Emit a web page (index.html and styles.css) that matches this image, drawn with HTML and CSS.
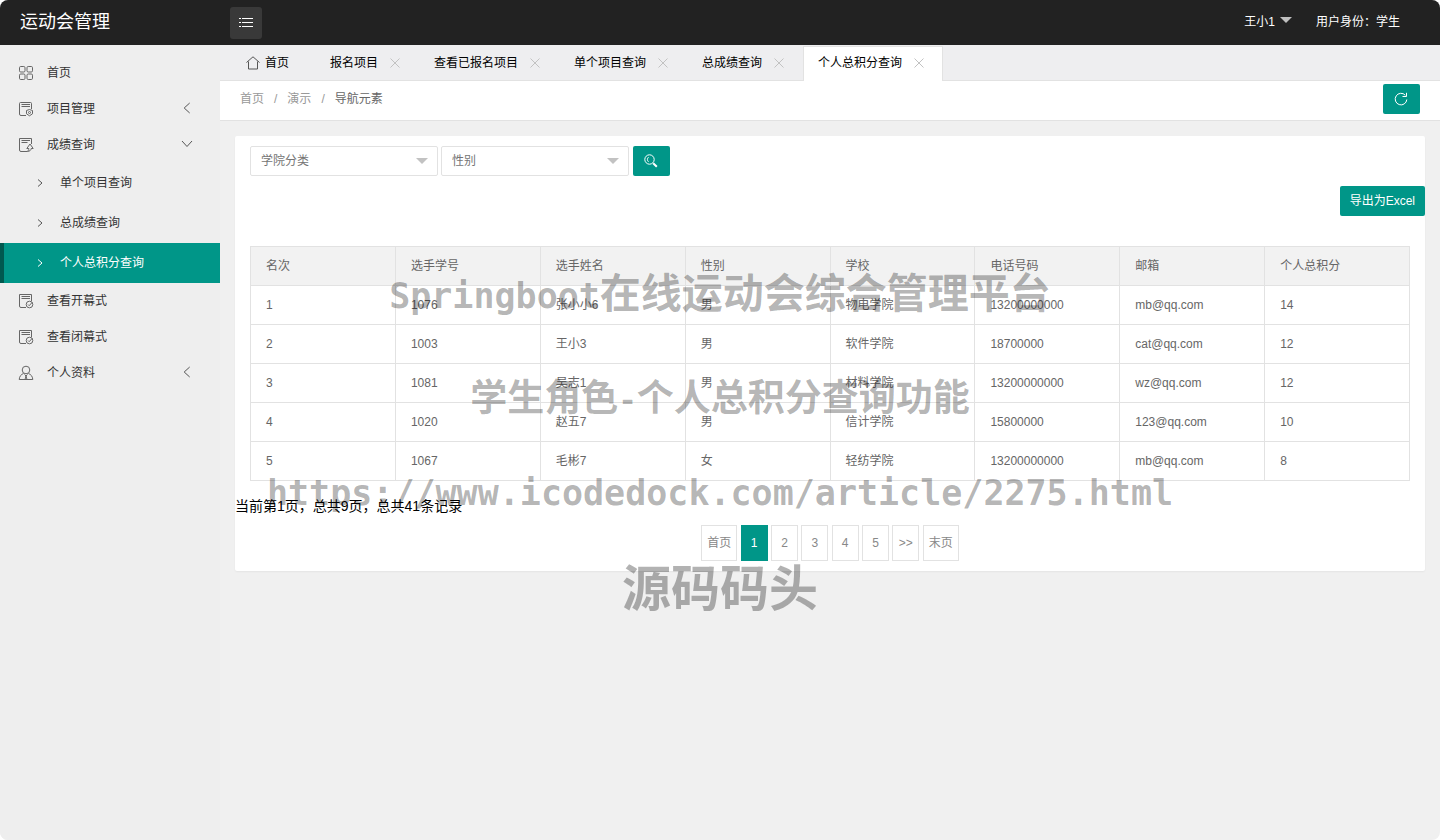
FILE: index.html
```html
<!DOCTYPE html>
<html lang="zh-CN">
<head>
<meta charset="utf-8">
<title>运动会管理</title>
<link rel="stylesheet" href="styles.css">
</head>
<body>
<svg class="sprite" width="0" height="0" aria-hidden="true">
  <symbol id="i-close" viewBox="0 0 10 10"><path d="M0.5 0.5l9 9M9.5 0.5l-9 9"/></symbol>
  <symbol id="i-left" viewBox="0 0 8 12"><path d="M6.700 1L1.200 6l5.500 5"/></symbol>
  <symbol id="i-down" viewBox="0 0 12 8"><path d="M1 1l5 5.500 5-5.500"/></symbol>
  <symbol id="i-right" viewBox="0 0 6 8"><path d="M1 0.500l4 3.500-4 3.500"/></symbol>
  <symbol id="i-check" viewBox="0 0 16 16"><path d="M8 14.500H3a1.500 1.500 0 0 1-1.500-1.500V1.500h12V8M3.500 3.500h8.500M3.500 5.500h8.500"/><circle cx="11.500" cy="11.500" r="3.300"/><path d="M10 11.500l1.200 1.200 3-3.400"/></symbol>
</svg>
<div class="app">
  <header class="header">
    <h1 class="brand">运动会管理</h1>
    <button class="menu-toggle" aria-label="菜单">
      <svg width="16" height="12" viewBox="0 0 16 12"><path d="M4 1.500h11M4 5.500h11M4 9.500h11M1 1.500h2M1 5.500h2M1 9.500h2"/></svg>
    </button>
    <div class="user">
      <button class="user-name">王小1<span class="caret"></span></button>
      <span>用户身份：学生</span>
    </div>
  </header>
  <div class="body">
    <nav class="sidebar">
      <a class="item" href="#"><svg class="icon" viewBox="0 0 16 16"><rect x="1.500" y="1.500" width="5.500" height="5.500" rx="1.200"/><rect x="9" y="1.500" width="5.500" height="5.500" rx="1.200"/><rect x="1.500" y="9" width="5.500" height="5.500" rx="1.200"/><rect x="9" y="9" width="5.500" height="5.500" rx="1.200"/></svg>首页</a>
      <a class="item" href="#"><svg class="icon" viewBox="0 0 16 16"><path d="M8 14.500H3a1.500 1.500 0 0 1-1.500-1.500V2.500a1 1 0 0 1 1-1h10a1 1 0 0 1 1 1V8M3.500 3.500h8.500M3.500 5.500h8.500"/><path d="M11.500 8.500l3 1v3.300l-3 2-3-2V9.500z"/><circle cx="11.500" cy="11.500" r="1"/></svg>项目管理<svg class="arrow" width="8" height="12"><use href="#i-left"/></svg></a>
      <a class="item" href="#"><svg class="icon" viewBox="0 0 16 16"><path d="M9 14.500H3a1.500 1.500 0 0 1-1.500-1.500V1.500h12V7M3.500 3.500h8.500M3.500 5.500h6M12 7l-3.200 4.500h2c0 1.500-.6 2.300-1.500 3 2.500-.2 3.700-1.200 3.900-3h2z"/></svg>成绩查询<svg class="arrow" width="12" height="8"><use href="#i-down"/></svg></a>
      <div class="sub">
        <a class="sub-item" href="#"><svg width="6" height="8"><use href="#i-right"/></svg>单个项目查询</a>
        <a class="sub-item" href="#"><svg width="6" height="8"><use href="#i-right"/></svg>总成绩查询</a>
        <a class="sub-item current" href="#"><svg width="6" height="8"><use href="#i-right"/></svg>个人总积分查询</a>
      </div>
      <a class="item" href="#"><svg class="icon"><use href="#i-check"/></svg>查看开幕式</a>
      <a class="item" href="#"><svg class="icon"><use href="#i-check"/></svg>查看闭幕式</a>
      <a class="item" href="#"><svg class="icon" viewBox="0 0 16 16"><circle cx="8" cy="5" r="3.800"/><path d="M5.500 8.500C3.200 9.500 1.500 11 1.200 14.500h13.600C14.500 11 12.800 9.500 10.500 8.500M6.500 9.500L8 11l1.500-1.500M8 11l-1 3.500M8 11l1 3.500"/></svg>个人资料<svg class="arrow" width="8" height="12"><use href="#i-left"/></svg></a>
    </nav>
    <main class="main">
      <div class="tabs">
        <div class="tab home"><svg width="14" height="14" viewBox="0 0 14 14"><path d="M0.500 6.500L7 0.800l6.500 5.700M2.500 5.500v7.500h9V5.500"/></svg>首页</div>
        <div class="tab">报名项目<button class="close" aria-label="关闭"><svg width="10" height="10"><use href="#i-close"/></svg></button></div>
        <div class="tab">查看已报名项目<button class="close" aria-label="关闭"><svg width="10" height="10"><use href="#i-close"/></svg></button></div>
        <div class="tab">单个项目查询<button class="close" aria-label="关闭"><svg width="10" height="10"><use href="#i-close"/></svg></button></div>
        <div class="tab">总成绩查询<button class="close" aria-label="关闭"><svg width="10" height="10"><use href="#i-close"/></svg></button></div>
        <div class="tab active">个人总积分查询<button class="close" aria-label="关闭"><svg width="10" height="10"><use href="#i-close"/></svg></button></div>
      </div>
      <div class="crumbs">
        <a href="#">首页</a><span>/</span><a href="#">演示</a><span>/</span><a class="here" href="#">导航元素</a>
        <button class="btn icon-btn refresh" aria-label="刷新"><svg width="14" height="14" viewBox="0 0 14 14"><path d="M11.300 3.200A5.800 5.800 0 1 0 12.800 7.500M12.500 0.800v3.700H8.500"/></svg></button>
      </div>
      <section class="card">
        <form class="filters">
          <span class="select"><select aria-label="学院分类"><option>学院分类</option></select></span>
          <span class="select"><select aria-label="性别"><option>性别</option></select></span>
          <button class="btn icon-btn search" type="button" aria-label="搜索"><svg width="14" height="14" viewBox="0 0 14 14"><circle cx="5.500" cy="5.500" r="4.700"/><path d="M4.500 3.200a3 3 0 0 0 0 4.600"/><path class="handle" d="M9.200 9.200l3.600 3.600"/></svg></button>
        </form>
        <div class="export"><button class="btn">导出为Excel</button></div>
        <table class="table">
          <thead><tr><th>名次</th><th>选手学号</th><th>选手姓名</th><th>性别</th><th>学校</th><th>电话号码</th><th>邮箱</th><th>个人总积分</th></tr></thead>
          <tbody>
            <tr><td>1</td><td>1076</td><td>张小小6</td><td>男</td><td>物电学院</td><td>13200000000</td><td>mb@qq.com</td><td>14</td></tr>
            <tr><td>2</td><td>1003</td><td>王小3</td><td>男</td><td>软件学院</td><td>18700000</td><td>cat@qq.com</td><td>12</td></tr>
            <tr><td>3</td><td>1081</td><td>吴志1</td><td>男</td><td>材料学院</td><td>13200000000</td><td>wz@qq.com</td><td>12</td></tr>
            <tr><td>4</td><td>1020</td><td>赵五7</td><td>男</td><td>信计学院</td><td>15800000</td><td>123@qq.com</td><td>10</td></tr>
            <tr><td>5</td><td>1067</td><td>毛彬7</td><td>女</td><td>轻纺学院</td><td>13200000000</td><td>mb@qq.com</td><td>8</td></tr>
          </tbody>
        </table>
        <p class="summary">当前第1页，总共9页，总共41条记录</p>
        <div class="pager">
          <a class="wide" href="#">首页</a>
          <a class="on" href="#">1</a>
          <a href="#">2</a>
          <a href="#">3</a>
          <a href="#">4</a>
          <a href="#">5</a>
          <a href="#">&gt;&gt;</a>
          <a class="wide" href="#">末页</a>
        </div>
      </section>
    </main>
  </div>
  <div class="watermark">
    <p class="wm-title"><span class="wm-latin">Springboot</span>在线运动会综合管理平台</p>
    <p class="wm-role">学生角色<span class="wm-dash">-</span>个人总积分查询功能</p>
    <p class="wm-url"><span class="wm-latin">https://www.icodedock.com/article/2275.html</span></p>
    <p class="wm-site">源码码头</p>
  </div>
</div>
</body>
</html>
```
FILE: styles.css
```css
* { box-sizing: border-box; }
body { margin: 0; background: #fff; font: 12px/18px "Liberation Sans", "Noto Sans CJK SC", sans-serif; color: #333; }
a { color: inherit; text-decoration: none; }
button { font: inherit; color: inherit; border: 0; padding: 0; background: none; cursor: pointer; }
p, h1 { margin: 0; }
svg { fill: none; stroke: currentColor; flex: none; }
.sprite { position: absolute; }

.app { position: relative; display: flex; flex-direction: column; min-height: 100vh; border-radius: 8px; overflow: hidden; background: #f0f0f0; }
.header { display: flex; align-items: center; height: 45px; background: #222; color: #fff; padding-right: 40px; }
.brand { width: 230px; padding-left: 20px; padding-bottom: 2px; font-size: 18px; font-weight: 400; line-height: 24px; }
.menu-toggle { display: flex; align-items: center; justify-content: center; width: 32px; height: 32px; border-radius: 3px; background: #393939; }
.user { display: flex; gap: 24px; margin-left: auto; padding-bottom: 2px; }
.user-name { display: flex; align-items: center; gap: 5px; }
.caret { border: 6px solid transparent; border-top-color: #bfbfbf; border-bottom: 0; margin-bottom: 3px; }

.body { display: flex; flex: 1; }
.sidebar { width: 220px; flex: none; padding-top: 10px; background: #eee; line-height: 19px; }
.item { display: flex; align-items: center; height: 36px; padding: 0 27px 0 18px; }
.icon { width: 16px; height: 16px; margin-right: 13px; color: #666; }
.arrow { margin: 0 0 2px auto; color: #555; }
.item .arrow[width="8"] { margin-right: 2px; }
.sub-item { display: flex; align-items: center; gap: 17px; height: 40px; padding-left: 37px; }
.sub-item svg { color: #555; }
.sub-item.current { background: #009688; color: #fff; border-left: 4px solid #00594f; padding-left: 33px; }
.sub-item.current svg { color: #fff; }

.main { flex: 1; min-width: 0; }
.tabs { display: flex; height: 36px; padding-left: 12px; background: #eeeef0; border-bottom: 1px solid #e2e2e2; color: #000; }
.tab { display: flex; align-items: center; margin-top: 1px; margin-bottom: -1px; padding: 0 18px 2px 14px; border: 1px solid transparent; border-bottom: 0; }
.tab.home { gap: 5px; padding: 0 25px 2px 13px; }
.tab.home svg { color: #555; }
.tab.active { background: #fff; border-color: #e2e2e2; }
.close { display: flex; margin-left: 12px; color: #c2c2c2; }
.crumbs { display: flex; align-items: center; height: 40px; padding: 0 20px 3px; background: #fff; border-bottom: 1px solid #e2e2e2; color: #999; }
.crumbs span { margin: 0 10px; }
.crumbs .here { color: #666; }
.btn { display: inline-flex; align-items: center; justify-content: center; height: 30px; padding: 0 10px; border-radius: 2px; background: #009688; color: #fff; }
.icon-btn { width: 37px; padding-right: 12px; }
.refresh { margin-left: auto; }
.handle { stroke-width: 2; }

.card { margin: 15px; padding-bottom: 10px; background: #fff; border-radius: 2px; box-shadow: 0 1px 2px rgba(0, 0, 0, .05); }
.filters { display: flex; gap: 3px; padding: 10px 15px; }
.select { position: relative; width: 188px; }
.select::after { content: ""; position: absolute; right: 10px; top: 12px; border: 6px solid transparent; border-top-color: #c2c2c2; border-bottom: 0; pointer-events: none; }
.select select { width: 100%; height: 30px; padding: 0 10px; appearance: none; border: 1px solid #e2e2e2; border-radius: 2px; background: #fff; font: inherit; color: #757575; }
.search { margin-left: 1px; }
.export { display: flex; justify-content: flex-end; margin-bottom: 30px; }
.table { width: calc(100% - 30px); margin: 0 15px; table-layout: fixed; border-collapse: collapse; color: #666; }
.table th, .table td { height: 39px; padding: 0 15px; border: 1px solid #e2e2e2; text-align: left; font-weight: 400; }
.table th { background: #f2f2f2; }
.summary { margin: 14px 0 8px; font-size: 14px; line-height: 22px; color: #000; }
.pager { height: 36px; text-align: center; color: #888; }
.pager a { display: inline-block; width: 27px; height: 36px; line-height: 34px; border: 1px solid #e2e2e2; vertical-align: top; }
.pager .wide { width: 36px; }
.pager .on { background: #009688; border-color: #009688; color: #fff; }

.watermark { position: absolute; inset: 260px 0 auto; text-align: center; color: rgba(0, 0, 0, .3); font-family: "Noto Sans CJK SC", sans-serif; font-weight: 700; pointer-events: none; white-space: nowrap; }
.watermark p { line-height: 60px; }
.watermark span { font-family: "DejaVu Sans Mono", monospace; line-height: 1px; }
.wm-title { font-size: 41px; }
.wm-role { margin-top: 45px; font-size: 37px; }
.wm-url { margin-top: 32px; font-size: 41px; }
.wm-site { margin-top: 38px; font-size: 49px; }
.wm-latin { font-size: 35px; }
.wm-dash { font-size: 31px; }
```
